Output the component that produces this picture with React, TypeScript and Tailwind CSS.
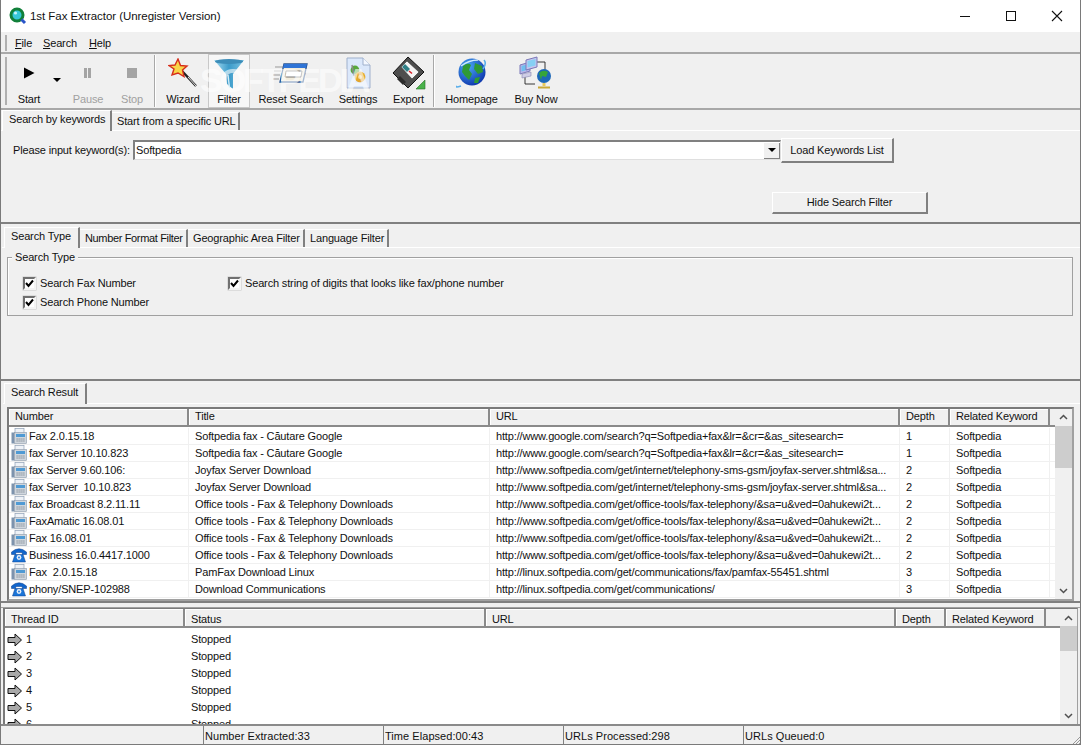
import React from "react";

function Play() {
  return <svg width="14" height="14" viewBox="0 0 14 14"><path d="M2 1.5 L12.5 7 L2 12.5 Z" fill="#000" /></svg>;
}
function Pause() {
  return <svg width="14" height="14" viewBox="0 0 14 14"><rect x="3" y="2" width="3" height="10" fill="#a4a4a4" /><rect x="7" y="2" width="3" height="10" fill="#a4a4a4" /></svg>;
}
function Stop() {
  return <svg width="14" height="14" viewBox="0 0 14 14"><rect x="2" y="2" width="10" height="10" fill="#a4a4a4" /></svg>;
}
function Wand() {
  return (
    <svg width="30" height="30" viewBox="0 0 30 30">
      <path d="M14 13 L28 28" stroke="#222" strokeWidth="2.4" />
      <path d="M20 19 L28 28" stroke="#e4e4e4" strokeWidth="1" />
      <path d="M10 1 L12.5 7.5 L19 8 L14.5 12 L16 18.5 L10 15 L4 17 L6 11 L1 7.5 L7 7 Z" fill="#f8d548" stroke="#d62e1c" strokeWidth="1.4" />
    </svg>
  );
}
function Funnel() {
  return (
    <svg width="32" height="34" viewBox="0 0 32 34">
      <defs>
        <linearGradient id="fn" x1="0" y1="0" x2="1" y2="0">
          <stop offset="0" stopColor="#a8dcf0" />
          <stop offset="0.5" stopColor="#3b9bca" />
          <stop offset="1" stopColor="#7cc2e0" />
        </linearGradient>
      </defs>
      <path d="M1 3 L31 3 L20 17 L20 32 L14 27 L13 17 Z" fill="url(#fn)" />
      <ellipse cx="16" cy="4.5" rx="14" ry="2.5" fill="#3d8db8" />
      <path d="M15 18 L16.5 31" stroke="#d4eef8" strokeWidth="1.4" />
    </svg>
  );
}
function ResetIcon() {
  return (
    <svg width="36" height="24" viewBox="0 0 36 24">
      <path d="M2 6 H10 M1 10 H8 M0 14 H7 M0 18 H6" stroke="#999" strokeWidth="1" />
      <path d="M11 3 L34 3 L30 21 L7 21 Z" fill="#f2ecdc" stroke="#24508f" strokeWidth="1.3" />
      <path d="M11 3 L34 3 L33 7 L10 7 Z" fill="#2f74d6" />
      <path d="M13 10 L29 10 L28 16 L12 16 Z" fill="#fff" stroke="#555" strokeWidth="0.8" />
    </svg>
  );
}
function SettingsIcon() {
  return (
    <svg width="26" height="32" viewBox="0 0 26 32">
      <path d="M2 1 H18 L25 8 V31 H2 Z" fill="#dbe8fb" stroke="#9fb0cc" />
      <path d="M18 1 V8 H25" fill="#f4f8ff" stroke="#9fb0cc" />
      <circle cx="10" cy="13" r="4.4" fill="#58a83c" />
      <circle cx="15" cy="20" r="5.4" fill="#e3a62f" />
      <circle cx="15" cy="20" r="2" fill="#f4dc9c" />
      <path d="M7 8 L9 19" stroke="#8a8a8a" strokeWidth="1.5" />
    </svg>
  );
}
function Floppy() {
  return (
    <svg width="34" height="34" viewBox="0 0 34 34">
      <path d="M16 1 L32 16 L16 32 L1 17 Z" fill="#4e4e4e" stroke="#111" />
      <path d="M15 5 L27 16 L20 23 L9 11 Z" fill="#f5f5f5" stroke="#333" strokeWidth="0.6" />
      <path d="M13 8 L18 13 L15 16 L10 11 Z" fill="#2f7f86" />
      <path d="M17 15 L20 17.5" stroke="#d8202a" strokeWidth="1.6" />
      <path d="M8 20 L14 26 L11 29 L5 23 Z" fill="#2b2b2b" />
      <path d="M33 24 V33 H24 Z" fill="#49b24a" stroke="#2a6e2a" strokeWidth="0.6" />
    </svg>
  );
}
function Globe() {
  return (
    <svg width="32" height="32" viewBox="0 0 32 32">
      <defs>
        <radialGradient id="gl" cx="0.35" cy="0.3" r="0.8">
          <stop offset="0" stopColor="#4aa8f5" />
          <stop offset="1" stopColor="#0a2fa8" />
        </radialGradient>
      </defs>
      <circle cx="16" cy="15" r="13.5" fill="url(#gl)" />
      <path d="M7 9 Q12 5 15 8 L13 13 L16 17 L13 23 L9 19 L6 15 Z" fill="#2f9a35" />
      <path d="M19 6 L26 9 L27 15 L22 17 L18 12 Z" fill="#2f9a35" />
      <path d="M19 21 L24 20 L22 26 L18 26 Z" fill="#2f9a35" />
      <path d="M5 9 Q13 3 22 3" fill="none" stroke="#cfeafc" strokeWidth="1.4" />
      <path d="M1 29 Q-1 31 5 29 M28 3 Q31 6 27 12" fill="none" stroke="#5aaeea" strokeWidth="1.6" />
    </svg>
  );
}
function Network() {
  return (
    <svg width="34" height="34" viewBox="0 0 34 34">
      <path d="M18 6 H26 V14 M6 20 V28 H16" fill="none" stroke="#222" strokeWidth="0.9" />
      <path d="M1 9 L11 6 L11 15 L1 18 Z" fill="#b9b6e8" stroke="#7a78b8" />
      <path d="M2.5 10 L9.5 8 L9.5 13.5 L2.5 15.5 Z" fill="#6ec0ef" />
      <path d="M7 4 L18 1 L18 11 L7 14 Z" fill="#c8c6ee" stroke="#7a78b8" />
      <path d="M8.5 5 L16.5 3 L16.5 9.5 L8.5 11.5 Z" fill="#86d0f4" />
      <path d="M3 18 L12 16 L12 20 L3 22 Z" fill="#cfcde6" stroke="#8886b0" strokeWidth="0.6" />
      <circle cx="25" cy="20" r="7" fill="#1d68b8" />
      <path d="M20 17 Q24 13 29 16 L27 21 L23 20 L22 24 Z" fill="#36a53a" />
      <rect x="23.5" y="27" width="3" height="3" fill="#e8c95c" />
      <path d="M19 31.5 H31" stroke="#c9a838" strokeWidth="2" />
    </svg>
  );
}
function AppIcon() {
  return (
    <svg width="18" height="18" viewBox="0 0 18 18">
      <circle cx="8" cy="8" r="6" fill="#36c7d8" stroke="#11803a" strokeWidth="3" />
      <path d="M12.5 12.5 L16 16" stroke="#2a55c8" strokeWidth="3" />
      <circle cx="6.5" cy="6" r="1.6" fill="#c8f4fa" />
    </svg>
  );
}
function FaxIcon() {
  return (
    <svg width="16" height="16" viewBox="0 0 16 16" className="shrink-0">
      <rect x="4" y="0.5" width="9" height="5" fill="#eef2f7" stroke="#8fa0b5" strokeWidth="0.7" />
      <rect x="0.5" y="4.5" width="3" height="11" fill="#7d93ad" />
      <rect x="3.5" y="4.5" width="12" height="11" fill="#cfd6dd" stroke="#8a98a8" strokeWidth="0.6" />
      <rect x="5" y="6" width="9" height="3" fill="#4f9ad4" />
      <path d="M5.5 11 H14 M5.5 13 H14" stroke="#77818c" strokeWidth="1" strokeDasharray="1.2 0.8" />
    </svg>
  );
}
function PhoneIcon() {
  return (
    <svg width="16" height="16" viewBox="0 0 16 16" className="shrink-0">
      <path d="M0.5 5 Q8 -1.5 15.5 5 L15.5 7.5 L11.5 7.5 L11 5.5 H5 L4.5 7.5 L0.5 7.5 Z" fill="#1166cc" stroke="#0c3d88" strokeWidth="0.5" />
      <path d="M4 7.5 H12 L14.5 15 H1.5 Z" fill="#1a74d8" stroke="#0c3d88" strokeWidth="0.5" />
      <circle cx="8" cy="10.5" r="2.4" fill="#e6eef8" />
      <circle cx="8" cy="10.5" r="0.9" fill="#1a74d8" />
    </svg>
  );
}
function ArrowIcon() {
  return (
    <svg width="16" height="14" viewBox="0 0 16 14" className="shrink-0">
      <path d="M1 4.5 H8 V1 L14.5 7 L8 13 V9.5 H1 Z" fill="#a8a8a8" stroke="#111" strokeWidth="1" />
    </svg>
  );
}

type ToolProps = { w: string; label: string; icon?: React.ReactNode; disabled?: boolean; pressed?: boolean };
function Tool({ w, label, icon, disabled, pressed }: ToolProps) {
  return (
    <div className={`${w} h-[54px] shrink-0 flex flex-col items-center ${pressed ? "bg-[#f7f7f7] border border-[#c8c8c8]" : ""}`}>
      <div className={`${pressed ? "h-[37px]" : "h-[38px]"} w-full flex items-center justify-center overflow-visible`}>{icon}</div>
      <div className={`leading-[14px] whitespace-nowrap ${disabled ? "text-[#a0a0a0]" : "text-[#111]"}`}>{label}</div>
    </div>
  );
}

function Sep() {
  return <div className="w-[2px] h-[52px] shrink-0 bg-[#a8a8a8] border-r border-white" />;
}

function U({ children }: { children: string }) {
  return <span className="underline underline-offset-1">{children}</span>;
}

function Check({ label }: { label: string }) {
  return (
    <div className="flex items-center gap-[4px] h-[19px] whitespace-nowrap">
      <div className="w-[13px] h-[13px] bg-white border-2 border-t-[#707070] border-l-[#707070] border-r-[#f4f4f4] border-b-[#f4f4f4] flex items-center justify-center shadow-[0_0_0_0.5px_#c8c8c8]">
        <svg width="9" height="9" viewBox="0 0 9 9"><path d="M1 4 L3.5 7 L8 1.5" fill="none" stroke="#000" strokeWidth="2" /></svg>
      </div>
      <span>{label}</span>
    </div>
  );
}

function ScrollBar({ thumb }: { thumb: string }) {
  return (
    <div className="w-[17px] shrink-0 bg-[#f0f0f0] flex flex-col">
      <div className="h-[17px] flex items-center justify-center">
        <svg width="9" height="6" viewBox="0 0 9 6"><path d="M1 5 L4.5 1.5 L8 5" fill="none" stroke="#505050" strokeWidth="1.5" /></svg>
      </div>
      <div className={`${thumb} bg-[#cdcdcd]`} />
      <div className="flex-1" />
      <div className="h-[17px] flex items-center justify-center">
        <svg width="9" height="6" viewBox="0 0 9 6"><path d="M1 1 L4.5 4.5 L8 1" fill="none" stroke="#505050" strokeWidth="1.5" /></svg>
      </div>
    </div>
  );
}

function HeadCell({ w, label, lh }: { w: string; label: string; lh: string }) {
  return (
    <div className={`${w} ${lh} shrink-0 h-full pl-[6px] whitespace-nowrap bg-[#f0f0f0] border-r-2 border-b-2 border-[#8a8a8a] shadow-[inset_1px_1px_0_#fff]`}>
      {label}
    </div>
  );
}

const results: [string, "fax" | "phone", string, string, string][] = [
  ["Fax 2.0.15.18", "fax", "Softpedia fax - Căutare Google", "http://www.google.com/search?q=Softpedia+fax&lr=&cr=&as_sitesearch=", "1"],
  ["fax Server 10.10.823", "fax", "Softpedia fax - Căutare Google", "http://www.google.com/search?q=Softpedia+fax&lr=&cr=&as_sitesearch=", "1"],
  ["fax Server 9.60.106:", "fax", "Joyfax Server Download", "http://www.softpedia.com/get/internet/telephony-sms-gsm/joyfax-server.shtml&sa...", "2"],
  ["fax Server  10.10.823", "fax", "Joyfax Server Download", "http://www.softpedia.com/get/internet/telephony-sms-gsm/joyfax-server.shtml&sa...", "2"],
  ["fax Broadcast 8.2.11.11", "fax", "Office tools - Fax & Telephony Downloads", "http://www.softpedia.com/get/office-tools/fax-telephony/&sa=u&ved=0ahukewi2t...", "2"],
  ["FaxAmatic 16.08.01", "fax", "Office tools - Fax & Telephony Downloads", "http://www.softpedia.com/get/office-tools/fax-telephony/&sa=u&ved=0ahukewi2t...", "2"],
  ["Fax 16.08.01", "fax", "Office tools - Fax & Telephony Downloads", "http://www.softpedia.com/get/office-tools/fax-telephony/&sa=u&ved=0ahukewi2t...", "2"],
  ["Business 16.0.4417.1000", "phone", "Office tools - Fax & Telephony Downloads", "http://www.softpedia.com/get/office-tools/fax-telephony/&sa=u&ved=0ahukewi2t...", "2"],
  ["Fax  2.0.15.18", "fax", "PamFax Download Linux", "http://linux.softpedia.com/get/communications/fax/pamfax-55451.shtml", "3"],
  ["phony/SNEP-102988", "phone", "Download Communications", "http://linux.softpedia.com/get/communications/", "3"],
];

function Cell({ w, children, pl = "pl-[6px]" }: { w: string; children: React.ReactNode; pl?: string }) {
  return (
    <div className={`${w} shrink-0 h-full ${pl} border-r border-[#f0f0f0] whitespace-pre overflow-hidden flex items-center`}>
      {children}
    </div>
  );
}

function Tab({ label, active, w }: { label: string; active?: boolean; w: string }) {
  return active ? (
    <div className={`${w} h-[21px] -mb-[1px] bg-[#f0f0f0] border-t border-l border-white border-r-2 border-r-[#808080] leading-[17px] pl-[6px] whitespace-nowrap relative z-10`}>
      {label}
    </div>
  ) : (
    <div className={`${w} h-[18px] mt-[3px] bg-[#f0f0f0] border-t border-white border-r-2 border-r-[#808080] leading-[16px] pl-[5px] whitespace-nowrap`}>
      {label}
    </div>
  );
}

export default function App() {
  return (
    <div className="font-['Liberation_Sans',Arial,sans-serif] w-[1081px] h-[745px] overflow-hidden bg-[#f0f0f0] text-[#111] text-[11px] tracking-[-0.15px] flex flex-col relative">
      {/* Title bar */}
      <div className="h-[32px] shrink-0 bg-white flex items-center">
        <div className="w-[9px]" />
        <AppIcon />
        <div className="ml-[3px] pt-[1px] whitespace-nowrap text-[11.5px] tracking-[-0.05px]">1st Fax Extractor (Unregister Version)</div>
        <div className="flex-1" />
        <div className="w-[46px] flex justify-center">
          <svg width="12" height="12" viewBox="0 0 12 12"><path d="M1 6.5 H11" stroke="#111" /></svg>
        </div>
        <div className="w-[46px] flex justify-center">
          <svg width="12" height="12" viewBox="0 0 12 12"><rect x="1.5" y="1.5" width="9" height="9" fill="none" stroke="#111" /></svg>
        </div>
        <div className="w-[46px] flex justify-center mr-[1px]">
          <svg width="12" height="12" viewBox="0 0 12 12"><path d="M1 1 L11 11 M11 1 L1 11" stroke="#111" strokeWidth="1.1" /></svg>
        </div>
      </div>

      {/* Menu */}
      <div className="h-[22px] shrink-0 flex items-center border-b-2 border-[#a8a8a8] pl-[5px] pt-[2px]">
        <div className="w-[2px] h-[16px] bg-[#b0b0b0] mr-[8px]" />
        <div className="w-[28px]"><U>F</U>ile</div>
        <div className="w-[46px]"><U>S</U>earch</div>
        <div><U>H</U>elp</div>
      </div>

      {/* Toolbar */}
      <div className="h-[56px] shrink-0 flex items-center border-b-2 border-[#a8a8a8] pl-[5px] relative">
        <div className="w-[2px] h-[48px] bg-[#b0b0b0] mr-[3px]" />
        <Tool w="w-[38px]" label="Start" icon={<Play />} />
        <div className="w-[18px] h-[54px] shrink-0 flex items-start justify-center pt-[24px]">
          <svg width="8" height="4" viewBox="0 0 8 4"><path d="M0 0 H8 L4 4 Z" fill="#000" /></svg>
        </div>
        <Tool w="w-[44px]" label="Pause" icon={<Pause />} disabled />
        <Tool w="w-[44px]" label="Stop" icon={<Stop />} disabled />
        <Sep />
        <div className="w-[3px]" />
        <Tool w="w-[48px]" label="Wizard" icon={<Wand />} />
        <div className="w-[1px]" />
        <Tool w="w-[42px]" label="Filter" icon={<Funnel />} pressed />
        <Tool w="w-[82px]" label="Reset Search" icon={<ResetIcon />} />
        <Tool w="w-[52px]" label="Settings" icon={<SettingsIcon />} />
        <Tool w="w-[49px]" label="Export" icon={<Floppy />} />
        <Sep />
        <Tool w="w-[73px]" label="Homepage" icon={<Globe />} />
        <Tool w="w-[56px]" label="Buy Now" icon={<Network />} />
        <div className="absolute left-[200px] top-[8px] text-[34px] leading-[36px] font-bold text-white/60 whitespace-nowrap tracking-[-3px] pointer-events-none">
          SOFTPEDIA
        </div>
      </div>

      {/* Keyword search */}
      <div className="h-[114px] shrink-0 flex flex-col border-b-2 border-[#808080]">
        <div className="h-[21px] shrink-0 flex items-end pl-[2px] border-b border-white">
          <Tab label="Search by keywords" active w="w-[110px]" />
          <Tab label="Start from a specific URL" w="w-[128px]" />
        </div>
        <div className="flex-1 pl-[13px] pt-[8px]">
          <div className="flex items-center h-[22px]">
            <div className="w-[120px] whitespace-nowrap">Please input keyword(s):</div>
            <div className="w-[648px] h-[20px] bg-white border-t-2 border-l-2 border-[#808080] border-r border-b border-r-[#dfdfdf] border-b-[#dfdfdf] flex items-center justify-between pl-[1px]">
              <span>Softpedia</span>
              <div className="w-[16px] h-[16px] bg-[#f0f0f0] border-r border-b border-[#808080] flex items-center justify-center">
                <svg width="8" height="4" viewBox="0 0 8 4"><path d="M0 0 H8 L4 4 Z" fill="#000" /></svg>
              </div>
            </div>
            <div className="w-[113px] h-[25px] pt-[1px] bg-[#f0f0f0] border-t border-l border-white border-r-2 border-b-2 border-r-[#808080] border-b-[#808080] flex items-center justify-center">
              Load Keywords List
            </div>
          </div>
          <div className="mt-[31px] ml-[759px] w-[156px] h-[22px] bg-[#f0f0f0] border-t border-l border-white border-r-2 border-b-2 border-r-[#808080] border-b-[#808080] flex items-center justify-center">
            Hide Search Filter
          </div>
        </div>
      </div>

      {/* Filter tabs */}
      <div className="h-[157px] shrink-0 flex flex-col border-b-2 border-[#808080] pl-[2px] pr-[1px]">
        <div className="h-[24px] shrink-0 flex items-end pl-[2px] border-b border-white">
          <Tab label="Search Type" active w="w-[76px]" />
          <div className="tracking-[-0.35px]"><Tab label="Number Format Filter" w="w-[108px]" /></div>
          <Tab label="Geographic Area Filter" w="w-[117px]" />
          <Tab label="Language Filter" w="w-[84px]" />
        </div>
        <div className="pl-[5px] pr-[7px] pt-[9px]">
          <div className="relative h-[59px] border border-[#a0a0a0] shadow-[inset_1px_1px_0_#fff] flex pl-[15px] pt-[16px]">
            <div className="absolute left-[4px] -top-[8px] px-[3px] bg-[#f0f0f0] leading-[14px]">Search Type</div>
            <div className="w-[205px] flex flex-col">
              <Check label="Search Fax Number" />
              <Check label="Search Phone Number" />
            </div>
            <Check label="Search string of digits that looks like fax/phone number" />
          </div>
        </div>
      </div>

      {/* Search result */}
      <div className="h-[220px] shrink-0 flex flex-col pl-[3px] pr-[1px]">
        <div className="h-[23px] shrink-0 flex items-end pl-[1px] border-b border-white">
          <Tab label="Search Result" active w="w-[83px]" />
        </div>
        <div className="h-[3px]" />
        <div className="ml-[4px] mr-[6px] h-[195px] flex border-2 border-[#7a7a7a] border-r-[#a0a0a0] border-b-[#a0a0a0] bg-white">
          <div className="flex-1 min-w-0 flex flex-col overflow-hidden">
            <div className="h-[18px] shrink-0 flex">
              <HeadCell lh="leading-[15px]" w="w-[180px]" label="Number" />
              <HeadCell lh="leading-[15px]" w="w-[301px]" label="Title" />
              <HeadCell lh="leading-[15px]" w="w-[410px]" label="URL" />
              <HeadCell lh="leading-[15px]" w="w-[50px]" label="Depth" />
              <HeadCell lh="leading-[15px]" w="w-[100px]" label="Related Keyword" />
              <div className="flex-1 h-full bg-[#f0f0f0] border-b-2 border-[#8a8a8a]" />
            </div>
            <div className="pt-[1px]">
              {results.map((r, i) => (
                <div key={i} className="h-[17px] flex border-b border-[#f0f0f0]">
                  <Cell w="w-[180px]" pl="pl-[2px]">
                    <span className="flex items-center gap-[2px]">
                      {r[1] === "fax" ? <FaxIcon /> : <PhoneIcon />}
                      <span>{r[0]}</span>
                    </span>
                  </Cell>
                  <Cell w="w-[301px]">{r[2]}</Cell>
                  <Cell w="w-[410px]">{r[3]}</Cell>
                  <Cell w="w-[50px]">{r[4]}</Cell>
                  <Cell w="w-[100px]">Softpedia</Cell>
                </div>
              ))}
            </div>
          </div>
          <ScrollBar thumb="h-[42px]" />
        </div>
      </div>

      {/* Splitter */}
      <div className="h-[7px] shrink-0 border-t-2 border-[#808080] border-b border-b-[#a0a0a0]" />

      {/* Threads */}
      <div className="h-[116px] shrink-0 mx-[3px] mr-[3px] flex border-t border-l-2 border-[#7a7a7a] border-r border-r-[#a0a0a0] bg-white">
        <div className="flex-1 min-w-0 flex flex-col overflow-hidden">
          <div className="h-[19px] shrink-0 flex">
            <HeadCell lh="leading-[20px]" w="w-[180px]" label="Thread ID" />
            <HeadCell lh="leading-[20px]" w="w-[301px]" label="Status" />
            <HeadCell lh="leading-[20px]" w="w-[410px]" label="URL" />
            <HeadCell lh="leading-[20px]" w="w-[50px]" label="Depth" />
            <HeadCell lh="leading-[20px]" w="w-[100px]" label="Related Keyword" />
            <div className="flex-1 h-full bg-[#f0f0f0] border-b-2 border-[#8a8a8a]" />
          </div>
          <div className="pt-[3px]">
            {["1", "2", "3", "4", "5", "6"].map((n) => (
              <div key={n} className="h-[17px] flex">
                <div className="w-[180px] shrink-0 pl-[2px] flex items-center gap-[3px]">
                  <ArrowIcon />
                  <span>{n}</span>
                </div>
                <div className="pl-[6px] flex items-center">Stopped</div>
              </div>
            ))}
          </div>
        </div>
        <ScrollBar thumb="h-[25px]" />
      </div>

      {/* Status bar */}
      <div className="h-[22px] shrink-0 flex items-center border-t-2 border-[#8a8a8a] relative tracking-[0.05px]">
        <div className="w-[203px] h-full" />
        <div className="w-[180px] h-full border-l border-[#808080] pl-[1px] leading-[20px]">Number Extracted:33</div>
        <div className="w-[180px] h-full border-l border-[#808080] pl-[1px] leading-[20px]">Time Elapsed:00:43</div>
        <div className="w-[180px] h-full border-l border-[#808080] pl-[1px] leading-[20px]">URLs Processed:298</div>
        <div className="flex-1 h-full border-l border-[#808080] pl-[1px] leading-[20px]">URLs Queued:0</div>
        <svg width="12" height="12" viewBox="0 0 12 12" className="absolute right-0 bottom-0">
          <path d="M11 3 L3 11 M11 6 L6 11 M11 9 L9 11" stroke="#999" strokeWidth="1" />
        </svg>
      </div>
      <div className="absolute inset-0 border-x border-b border-[#7a7a7a] pointer-events-none" />
    </div>
  );
}
